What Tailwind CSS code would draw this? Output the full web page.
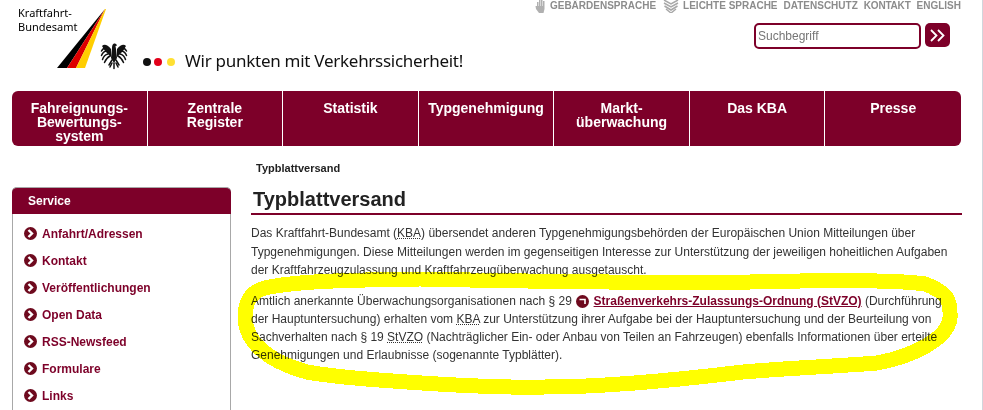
<!DOCTYPE html>
<html lang="de">
<head>
<meta charset="UTF-8">
<title>Typblattversand</title>
<script src="https://cdn.jsdelivr.net/npm/@tailwindcss/browser@4"></script>
</head>
<body class="bg-white">
<div class="relative w-[983px] h-[410px] overflow-hidden border-r border-gray-300 font-['Liberation_Sans',Arial,sans-serif]">

  <!-- Header -->
  <header class="flex h-[91px]">
    <div class="relative w-[142px] h-full shrink-0">
      <div class="pl-[18px] pt-[6px] font-['Noto_Sans',sans-serif] text-[11px] leading-[14px] text-black">Kraftfahrt-<br>Bundesamt</div>
      <svg class="absolute left-[55px] top-[7px]" width="75" height="63" viewBox="0 0 75 63">
        <polygon points="2,61 12,61 50,2" fill="#000"/>
        <polygon points="12,61 21,61 50,2" fill="#dd0000"/>
        <polygon points="21,61 30,61 51,2 50,2" fill="#ffce00"/>
        <!-- Bundesadler -->
        <g fill="#111">
          <path d="M56 42 C52 37 49 37 47 39 L50 44 L56 50 Z"/>
          <path d="M62 42 C66 37 69 37 71 39 L68 44 L62 50 Z"/>
          <path d="M57 41 C57 38 58 37 59 36.500 C60.500 36.500 61.500 37 62 38.500 L60.500 39 L61 42 L62 51 L59 56 L56 51 Z"/>
        </g>
        <g fill="none" stroke="#111" stroke-width="1.500" stroke-linecap="round">
          <path d="M51 41 C49 41 47.500 42 46.500 44"/>
          <path d="M52 44 C49.500 44 47.500 46 46.500 48.500"/>
          <path d="M53 47 C50.500 47.500 48.500 49.500 47.500 52.500"/>
          <path d="M55 49 C53 50 51 52 49.500 55.500"/>
          <path d="M67 41 C69 41 70.500 42 71.500 44"/>
          <path d="M66 44 C68.500 44 70.500 46 71.500 48.500"/>
          <path d="M65 47 C67.500 47.500 69.500 49.500 70.500 52.500"/>
          <path d="M63 49 C65 50 67 52 68.500 55.500"/>
          <path d="M57 53 L54 58 M61 53 L64 58"/>
          <path d="M57 56 L55 60 M59 56 L59 61.500 M61 56 L63 60"/>
        </g>
      </svg>
    </div>
    <div class="flex items-start pt-[50px] w-[340px] shrink-0">
      <div class="flex items-center gap-[3px] mt-[8px] w-[43px]">
        <span class="w-2 h-2 rounded-full bg-[#111] ml-[1px]"></span>
        <span class="w-2 h-2 rounded-full bg-[#e2001a]"></span>
        <span class="w-2 h-2 rounded-full bg-[#ffe033] ml-[2px]"></span>
      </div>
      <span class="font-['Noto_Sans',sans-serif] text-[17px] leading-[22px] text-[#111] tracking-[-0.27px] whitespace-nowrap">Wir punkten mit Verkehrssicherheit!</span>
    </div>
    <div class="flex-1 flex flex-col items-end pr-[21px]">
      <div class="flex items-center h-[12px] text-[10px] font-bold text-[#8c8c8c] leading-none whitespace-nowrap">
        <svg class="mr-[2px]" width="14" height="14" viewBox="0 0 14 14" fill="#b0b0b0"><path d="M3 3h1.500v5H3zM5 0h1.500v8H5zM7 0h1.500v8H7zM9 2h1.500v6H9zM3 7h7.500v3l-1 4H5l-3-4-.500-3z"/></svg>
        <span class="mr-[7px]">GEBÄRDENSPRACHE</span>
        <svg class="mr-[4px]" width="16" height="14" viewBox="0 0 16 14" fill="none" stroke="#a8a8a8" stroke-width="1.500"><path d="M1 1l7 4 7-4M1 4l7 4 7-4M1.500 7L8 11l6.500-4M3 10l5 4 5-4"/></svg>
        <span class="mr-[6px]">LEICHTE SPRACHE</span>
        <span class="mr-[6px]">DATENSCHUTZ</span>
        <span class="mr-[6px] tracking-[-0.2px]">KONTAKT</span>
        <span>ENGLISH</span>
      </div>
      <form class="flex items-start gap-1 mt-[11px] mr-[11px]">
        <input type="text" placeholder="Suchbegriff" class="w-[167px] h-[26px] border-2 border-[#7d0029] rounded-[5px] px-[2px] text-[12px] bg-white placeholder-[#767676] outline-none">
        <button type="button" class="w-[25px] h-[24px] bg-[#7d0029] rounded-[5px] flex items-center justify-center">
          <svg width="15" height="13" viewBox="0 0 15 13" fill="none" stroke="#fff" stroke-width="1.800"><path d="M1 1l5.500 5.500L1 12M8 1l5.500 5.500L8 12"/></svg>
        </button>
      </form>
    </div>
  </header>

  <!-- Hauptnavigation -->
  <nav class="ml-[12px] w-[949px] h-[55px] bg-[#7d0029] rounded-[6px] grid grid-cols-7 divide-x divide-white text-white text-[14px] leading-[14px] font-bold text-center">
    <div class="pt-[10px] px-2">Fahreignungs-<br>Bewertungs-<br>system</div>
    <div class="pt-[10px] px-2">Zentrale<br>Register</div>
    <div class="pt-[10px] px-2">Statistik</div>
    <div class="pt-[10px]">Typgenehmigung</div>
    <div class="pt-[10px] px-2">Markt-<br>überwachung</div>
    <div class="pt-[10px] px-2">Das KBA</div>
    <div class="pt-[10px] px-2">Presse</div>
  </nav>

  <div class="flex mt-[15px]">
    <!-- Service -->
    <aside class="ml-[12px] w-[219px] shrink-0 pt-[26px]">
      <div class="border border-t-0 border-[#a8a8a8] rounded-t-[5px] h-[240px]">
        <div class="h-[27px] ml-[-1px] mr-[-1px] bg-[#7d0029] border-t border-[#a8a8a8] rounded-t-[5px] text-white text-[12px] font-bold leading-[26px] pl-[16px]">Service</div>
        <ul class="pt-[6px] text-[12px] font-bold text-[#7d0029]">
          <li class="flex items-center h-[27px] pl-[11px] gap-[5px]"><svg width="13" height="13" viewBox="0 0 13 13"><circle cx="6.500" cy="6.500" r="6.500" fill="#6e0a1e"/><path d="M4.500 3l3.500 3.500L4.500 10" fill="none" stroke="#fff" stroke-width="2.400"/></svg>Anfahrt/Adressen</li>
          <li class="flex items-center h-[27px] pl-[11px] gap-[5px]"><svg width="13" height="13" viewBox="0 0 13 13"><circle cx="6.500" cy="6.500" r="6.500" fill="#6e0a1e"/><path d="M4.500 3l3.500 3.500L4.500 10" fill="none" stroke="#fff" stroke-width="2.400"/></svg>Kontakt</li>
          <li class="flex items-center h-[27px] pl-[11px] gap-[5px]"><svg width="13" height="13" viewBox="0 0 13 13"><circle cx="6.500" cy="6.500" r="6.500" fill="#6e0a1e"/><path d="M4.500 3l3.500 3.500L4.500 10" fill="none" stroke="#fff" stroke-width="2.400"/></svg>Veröffentlichungen</li>
          <li class="flex items-center h-[27px] pl-[11px] gap-[5px]"><svg width="13" height="13" viewBox="0 0 13 13"><circle cx="6.500" cy="6.500" r="6.500" fill="#6e0a1e"/><path d="M4.500 3l3.500 3.500L4.500 10" fill="none" stroke="#fff" stroke-width="2.400"/></svg>Open Data</li>
          <li class="flex items-center h-[27px] pl-[11px] gap-[5px]"><svg width="13" height="13" viewBox="0 0 13 13"><circle cx="6.500" cy="6.500" r="6.500" fill="#6e0a1e"/><path d="M4.500 3l3.500 3.500L4.500 10" fill="none" stroke="#fff" stroke-width="2.400"/></svg>RSS-Newsfeed</li>
          <li class="flex items-center h-[27px] pl-[11px] gap-[5px]"><svg width="13" height="13" viewBox="0 0 13 13"><circle cx="6.500" cy="6.500" r="6.500" fill="#6e0a1e"/><path d="M4.500 3l3.500 3.500L4.500 10" fill="none" stroke="#fff" stroke-width="2.400"/></svg>Formulare</li>
          <li class="flex items-center h-[27px] pl-[11px] gap-[5px]"><svg width="13" height="13" viewBox="0 0 13 13"><circle cx="6.500" cy="6.500" r="6.500" fill="#6e0a1e"/><path d="M4.500 3l3.500 3.500L4.500 10" fill="none" stroke="#fff" stroke-width="2.400"/></svg>Links</li>
        </ul>
      </div>
    </aside>

    <!-- Inhalt -->
    <main class="ml-[20px] w-[711px]">
      <div class="pl-[5px] text-[11px] leading-[14px] font-bold text-[#222]">Typblattversand</div>
      <h1 class="mt-[9px] pl-[2px] pt-[1px] h-[31px] border-b-2 border-[#7d0029] text-[20px] leading-[28px] font-bold text-[#222]">Typblattversand</h1>
      <p class="mt-[9px] text-[12px] leading-[18.500px] text-[#333] whitespace-nowrap">Das Kraftfahrt-Bundesamt (<abbr class="underline decoration-dotted">KBA</abbr>) übersendet anderen Typgenehmigungsbehörden der Europäischen Union Mitteilungen über<br>Typgenehmigungen. Diese Mitteilungen werden im gegenseitigen Interesse zur Unterstützung der jeweiligen hoheitlichen Aufgaben<br>der Kraftfahrzeugzulassung und Kraftfahrzeugüberwachung ausgetauscht.</p>
      <p class="mt-[12px] text-[12px] leading-[18px] text-[#333] whitespace-nowrap">Amtlich anerkannte Überwachungsorganisationen nach § 29 <svg class="inline-block align-[-3px] mx-[1px]" width="13" height="13" viewBox="0 0 13 13"><circle cx="6.500" cy="6.500" r="6.500" fill="#6e0a1e"/><path d="M3.500 4.500H9V9" fill="none" stroke="#fff" stroke-width="1.600"/></svg> <a href="#" class="font-bold text-[#7d0029] underline">Straßenverkehrs-Zulassungs-Ordnung (StVZO)</a> (Durchführung<br>der Hauptuntersuchung) erhalten vom <abbr class="underline decoration-dotted">KBA</abbr> zur Unterstützung ihrer Aufgabe bei der Hauptuntersuchung und der Beurteilung von<br>Sachverhalten nach § 19 <abbr class="underline decoration-dotted">StVZO</abbr> (Nachträglicher Ein- oder Anbau von Teilen an Fahrzeugen) ebenfalls Informationen über erteilte<br>Genehmigungen und Erlaubnisse (sogenannte Typblätter).</p>
    </main>
  </div>

  <!-- gelbe Markierung -->
  <svg class="absolute left-0 top-0 pointer-events-none mix-blend-multiply" width="983" height="410" viewBox="0 0 983 410" shape-rendering="crispEdges">
    <path d="M420 279 C350 280 295 281 265 288 C250 292 245 303 245 318 C246 340 264 360 307 372 C340 378 380 380 407 382 C450 385 500 388 545 387 C600 387 660 382 743 372 C790 368 840 366 877 363 C915 356 948 338 950 318 C951 300 947 292 925 284 C890 279 830 281 800 281 C700 284 560 282 420 279 Z" fill="none" stroke="#ffff00" stroke-width="15" stroke-linejoin="round"/>
  </svg>
</div>
</body>
</html>
